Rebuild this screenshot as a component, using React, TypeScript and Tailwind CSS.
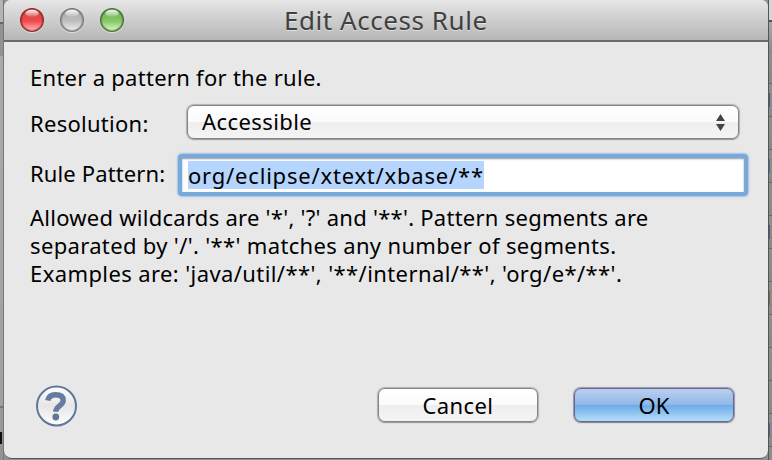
import React from 'react';

const TEXT = 'block whitespace-nowrap';
const GLOSS = 'bg-[linear-gradient(#ffffff_0%,#fbfbfb_49%,#eeeeee_51%,#f4f4f4_100%)]';
const EDGE = 'rounded-[7px] border border-[#858585] shadow-[0_0_1px_1px_rgba(110,110,110,.45),0_1px_1px_rgba(0,0,0,.2)]';

function Light({ id, edge, top, mid, low }: { id: string; edge: string; top: string; mid: string; low: string }) {
  return (
    <svg width="26" height="26" viewBox="0 0 26 26">
      <defs>
        <linearGradient id={id} x1="0" y1="0" x2="0" y2="1">
          <stop offset="0" stopColor={top} />
          <stop offset="0.55" stopColor={mid} />
          <stop offset="1" stopColor={low} />
        </linearGradient>
        <linearGradient id={id + 'shine'} x1="0" y1="0" x2="0" y2="1">
          <stop offset="0" stopColor="#fff" stopOpacity="0.95" />
          <stop offset="1" stopColor="#fff" stopOpacity="0.1" />
        </linearGradient>
      </defs>
      <circle cx="13" cy="14" r="12" fill="#fff" opacity="0.5" />
      <circle cx="13" cy="13" r="11.4" fill={'url(#' + id + ')'} stroke={edge} strokeWidth="1.3" />
      <circle cx="13" cy="13" r="10.3" fill="none" stroke={edge} strokeWidth="1.2" opacity="0.35" />
      <ellipse cx="13" cy="6.3" rx="6.6" ry="3.6" fill={'url(#' + id + 'shine)'} />
    </svg>
  );
}

function LeftEdge() {
  return (
    <div className="flex h-full w-1 shrink-0 flex-col overflow-hidden border-r border-[#777]">
      <div className="h-[22px] bg-[#b4b4b4]" />
      <div className="h-[2px] bg-[#666]" />
      <div className="h-[32px] bg-[#929292]" />
      <div className="h-[350px] bg-linear-to-b from-[#aaaaaa] to-[#a0a0a0]" />
      <div className="h-[2px] bg-[#777]" />
      <div className="h-[24px] bg-[#999]" />
      <div className="h-[12px] w-[2px] bg-[#111]" />
      <div className="flex-1 bg-[#929292]" />
    </div>
  );
}

function RightEdge() {
  const rows = [
    { h: 31, mark: '' }, { h: 33, mark: 'bg-[#45627c]' }, { h: 33, mark: '' }, { h: 33, mark: 'bg-[#447095]' },
    { h: 33, mark: '' }, { h: 33, mark: 'bg-[#4c5687]' }, { h: 33, mark: '' }, { h: 33, mark: 'bg-[#76695a]' },
    { h: 33, mark: '' }, { h: 33, mark: '' }, { h: 33, mark: '' }, { h: 33, mark: 'bg-[#4d6186]' },
  ];
  return (
    <div className="flex h-full w-1 shrink-0 flex-col overflow-hidden border-l border-[#555] bg-[#8e8c8b]">
      <div className="h-[20px] shrink-0 bg-[#d5d5d5]" />
      <div className="h-[2px] shrink-0 bg-[#555]" />
      <div className="h-[31px] shrink-0 bg-linear-to-b from-[#aaa] to-[#888]" />
      {rows.map((r, i) => (
        <div key={i} className="flex shrink-0 items-center border-b border-[#6b6968] bg-linear-to-b from-[#918f8e] to-[#8b8988]" style={{ height: r.h }}>
          <div className={'h-[14px] w-px ' + r.mark} />
        </div>
      ))}
    </div>
  );
}

export default function App() {
  return (
    <div className="flex h-[460px] w-[772px] overflow-hidden bg-[#929292] font-['Noto_Sans','Open_Sans',sans-serif] text-[22px] leading-[28px] text-black">
      <LeftEdge />
      <main className="flex h-[459px] w-[764px] shrink-0 flex-col overflow-hidden rounded-t-[7px] rounded-b-[8px] border-b border-[#555] bg-[#e8e8e8]">
        <header className="flex h-[42px] shrink-0 items-center border-b-2 border-[#6b6b6b] bg-linear-to-b from-[#e6e6e6] to-[#b6b6b6] pl-[15px]">
          <div className="flex w-[265px] gap-[14px]">
            <Light id="close" edge="#8d2c2c" top="#d34b49" mid="#f2474a" low="#ffc3c0" />
            <Light id="minimize" edge="#777" top="#a8a8a8" mid="#bdbdbd" low="#f4f4f4" />
            <Light id="zoom" edge="#47713a" top="#6ea953" mid="#87c76a" low="#e4fac5" />
          </div>
          <h1 className={TEXT + ' text-[26px] font-normal tracking-[0.55px] text-[#404040] [text-shadow:0_1px_0_rgba(255,255,255,.5)]'}>
            Edit Access Rule
          </h1>
        </header>

        <p className={TEXT + ' mt-[21px] ml-[26px] tracking-[0.28px]'}>Enter a pattern for the rule.</p>

        <div className="mt-[12px] ml-[26px] flex h-[36px] shrink-0 items-center">
          <label className={TEXT + ' w-[157px] pt-[4px] tracking-[0.27px]'}>Resolution:</label>
          <div className={'mt-[2px] flex h-[34px] w-[552px] items-center justify-between pr-[13px] pl-[14px] ' + GLOSS + ' ' + EDGE}>
            <span className={TEXT + ' mb-[2px] tracking-[0.42px]'}>Accessible</span>
            <svg width="9" height="17" viewBox="0 0 9 17" fill="#444">
              <path d="M4.5 0 9 7H0zM0 10h9l-4.5 7z" />
            </svg>
          </div>
        </div>

        <div className="mt-[14px] ml-[26px] flex h-[44px] shrink-0 items-center">
          <label className={TEXT + ' w-[148px] pb-[4px] tracking-[0.13px]'}>Rule Pattern:</label>
          <div className="flex h-[42px] w-[570px] items-center rounded-[4px] border-4 border-[#78a9d8] bg-white pl-[6px] shadow-[0_0_2px_1px_#a3c4e3,inset_0_1px_2px_#8d9dac]">
            <span className={TEXT + ' bg-[#b5d5ff] tracking-[0.8px]'}>org/eclipse/xtext/xbase/**</span>
          </div>
        </div>

        <div className="mt-[6px] ml-[26px] h-[84px] shrink-0">
          <p className={TEXT + ' tracking-[0.26px]'}>Allowed wildcards are '*', '?' and '**'. Pattern segments are</p>
          <p className={TEXT + ' tracking-[0.34px]'}>separated by '/'. '**' matches any number of segments.</p>
          <p className={TEXT + ' tracking-[0.4px]'}>Examples are: 'java/util/**', '**/internal/**', 'org/e*/**'.</p>
        </div>

        <footer className="mt-[97px] ml-[31px] flex shrink-0 items-start">
          <svg width="44" height="44" viewBox="0 0 44 44" className="shrink-0">
            <defs>
              <linearGradient id="help" x1="0" y1="0" x2="0" y2="1">
                <stop offset="0" stopColor="#fff" />
                <stop offset="0.5" stopColor="#e6e6e6" />
                <stop offset="1" stopColor="#fff" />
              </linearGradient>
            </defs>
            <circle cx="21.5" cy="22" r="19.5" fill="url(#help)" stroke="#60759a" strokeWidth="2" />
            <path d="M12.8 16.5C13.6 12.4 16.6 10.8 20.6 10.8c4.6 0 7.6 1.8 7.6 5.6 0 5.2-7.4 5.2-7.4 11.3" fill="none" stroke="#667ba0" strokeWidth="5.4" />
            <circle cx="20.8" cy="33" r="3.4" fill="#60759a" />
          </svg>
          <button className={'mt-[4px] ml-[299px] h-[34px] w-[160px] ' + GLOSS + ' ' + EDGE}>
            <span className={TEXT + ' tracking-[0.4px]'}>Cancel</span>
          </button>
          <button className="mt-[4px] ml-[36px] h-[34px] w-[160px] rounded-[7px] border border-[#64648e] bg-[linear-gradient(#bbcfee_0%,#90b7e9_49%,#6dabea_51%,#b4def6_100%)] shadow-[0_0_1px_1px_rgba(85,85,130,.55),0_1px_1px_rgba(0,0,0,.2)]">
            <span className={TEXT}>OK</span>
          </button>
        </footer>
      </main>
      <RightEdge />
    </div>
  );
}
